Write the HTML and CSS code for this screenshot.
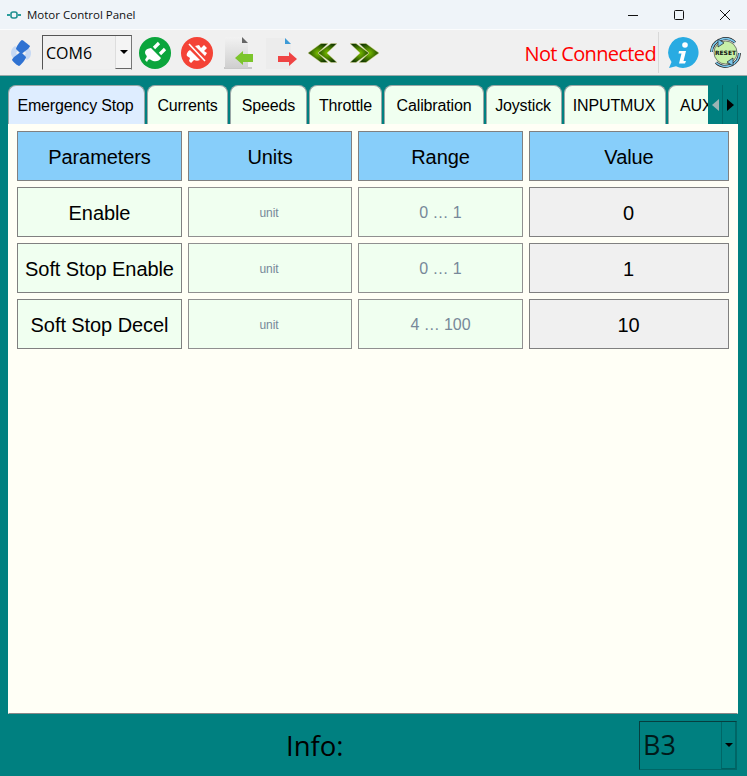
FILE: index.html
```html
<!DOCTYPE html>
<html lang="en">
<head>
<meta charset="utf-8">
<title>Motor Control Panel</title>
<link rel="stylesheet" href="styles.css">
</head>
<body>
<div class="app">
  <header class="titlebar">
    <svg class="app-icon" width="14" height="8" viewBox="0 0 14 8"><path d="M0 4h3M11 4h3" stroke="#2a9d9d" stroke-width="2"/><rect x="4" y="1" width="6" height="6" rx="2" fill="none" stroke="#1f8f8f" stroke-width="1.6"/></svg>
    <span class="title">Motor Control Panel</span>
    <div class="win-controls">
      <svg width="12" height="12" viewBox="0 0 12 12"><path d="M1 6.500h10" stroke="#111" stroke-width="1"/></svg>
      <svg width="12" height="12" viewBox="0 0 12 12"><rect x="1.500" y="1.500" width="9" height="9" rx="1" fill="none" stroke="#111"/></svg>
      <svg width="12" height="12" viewBox="0 0 12 12"><path d="M1 1l10 10M11 1L1 11" stroke="#111" stroke-width="1"/></svg>
    </div>
  </header>

  <div class="toolbar">
    <svg class="tb-logo" width="22" height="26" viewBox="0 0 22 26">
      <path d="M1 13c0-3 1-5 4-7l4 3-3 4 4 4-3 3c-4-1-6-4-6-7z" fill="#c6d9f4"/>
      <path d="M21 13c0 3-1 5-4 7l-4-3 3-4-4-4 3-3c4 1 6 4 6 7z" fill="#c6d9f4"/>
      <path d="M12 0c1 0 7 5 8 6 0 2-6 6-9 8L6 9c0-2 4-8 6-9z" fill="#2f72d2"/>
      <path d="M9 26c-1 0-6-4-7-6 0-2 6-6 9-8l5 5c0 2-5 8-7 9z" fill="#2f72d2"/>
    </svg>
    <div class="combo combo-com">
      <span class="combo-text">COM6</span>
      <span class="combo-btn"><i class="caret"></i></span>
    </div>
    <svg class="round-btn" width="32" height="32" viewBox="0 0 32 32">
      <circle cx="16" cy="16" r="16" fill="#0ba53c"/>
      <path d="M12 11l10 10c-2 4-7 4-10 2-1-1-2-1-3 0l-1 2-2-2 1-2c1-1 1-2 0-3-2-3-1-6 5-7z" fill="#fff"/>
      <path d="M15 11l5-5M21 17l5-5" stroke="#fff" stroke-width="3.200"/>
    </svg>
    <svg class="round-btn" width="32" height="32" viewBox="0 0 32 32">
      <circle cx="16" cy="16" r="16" fill="#f44336"/>
      <path d="M9 13l10 10c-2 1-4 1-6 0l-3 3-2-2 1-3-3-2c-1-2 1-5 3-6z" fill="#fff"/>
      <path d="M14 9l10 10 2-3-3-2 3-3-3-3-3 3-2-3z" fill="#fff"/>
      <path d="M8 7l16 17" stroke="#fff" stroke-width="1.600"/>
    </svg>
    <svg class="file-btn" width="32" height="34" viewBox="0 0 32 34">
      <defs><linearGradient id="pg" x1="0" y1="0" x2="0" y2="1"><stop offset="0" stop-color="#f2f2f2"/><stop offset="1" stop-color="#cfcfcf"/></linearGradient></defs>
      <path d="M0 31h28v2H0z" fill="#c8c8c8"/>
      <path d="M1 1h17l6 6v25H1z" fill="url(#pg)"/>
      <path d="M18 1l6 6h-6z" fill="#666"/>
      <path d="M11 22l8-7v3h10v8H19v3z" fill="#7cc52c"/>
    </svg>
    <svg class="file-btn" width="32" height="34" viewBox="0 0 32 34">
      <path d="M1 2h19l6 6v25H1z" fill="#ececec"/>
      <path d="M20 2l6 6h-6z" fill="#3d9ad6"/>
      <path d="M13 20h11v-4l8 7-8 7v-4H13z" fill="#ef4444"/>
    </svg>
    <svg class="chev" width="31" height="20" viewBox="0 0 31 20">
      <defs><radialGradient id="cg" cx=".5" cy=".5" r=".55"><stop offset="0" stop-color="#7cc000"/><stop offset="1" stop-color="#123800"/></radialGradient></defs>
      <path d="M14 .5h7L11 10l10 9.500h-7L1 10z" fill="url(#cg)" stroke="#d8d890" stroke-width=".5"/>
      <path d="M24 .5h6L20 10l10 9.500h-6L11 10z" fill="url(#cg)" stroke="#d8d890" stroke-width=".5"/>
    </svg>
    <svg class="chev chev-next" width="31" height="20" viewBox="0 0 31 20">
      <path d="M17 .5h-7l10 9.500-10 9.500h7L30 10z" fill="url(#cg)" stroke="#d8d890" stroke-width=".5"/>
      <path d="M7 .5H1l10 9.500L1 19.500h6L20 10z" fill="url(#cg)" stroke="#d8d890" stroke-width=".5"/>
    </svg>
    <span class="status">Not Connected</span>
    <span class="tb-sep"></span>
    <svg class="info" width="32" height="32" viewBox="0 0 32 32">
      <path d="M16 0a15.500 15.500 0 1 1-7 29.300L2 31l2.500-6A15.500 15.500 0 0 1 16 0z" fill="#29abe2"/>
      <circle cx="18" cy="8" r="2.800" fill="#fff"/>
      <path d="M12 14h7l-2.500 10h2.500l-1 2.500h-6l2.500-10h-3z" fill="#fff"/>
    </svg>
    <svg class="reset" width="33" height="33" viewBox="0 0 33 33">
      <circle cx="16.500" cy="16.500" r="11.500" fill="#c8f0a8" stroke="#333" stroke-width=".6"/>
      <path d="M2.500 16A14 14 0 0 1 26 6.500" fill="none" stroke="#222" stroke-width="3"/>
      <path d="M30.500 17A14 14 0 0 1 7 26.500" fill="none" stroke="#222" stroke-width="3"/>
      <path d="M2.500 16A14 14 0 0 1 26 6.500" fill="none" stroke="#7cc8ec" stroke-width="1.600"/>
      <path d="M30.500 17A14 14 0 0 1 7 26.500" fill="none" stroke="#7cc8ec" stroke-width="1.600"/>
      <path d="M9 3l0 8 6-4zM24 30l0-8-6 4z" fill="#7cc8ec" stroke="#222" stroke-width=".7"/>
      <text x="16.500" y="18.800" class="reset-text" text-anchor="middle">RESET</text>
    </svg>
  </div>

  <main class="content">
    <nav class="tabs">
      <div class="tab tab-active w-emergency">Emergency Stop</div>
      <div class="tab w-currents">Currents</div>
      <div class="tab w-speeds">Speeds</div>
      <div class="tab w-throttle">Throttle</div>
      <div class="tab w-calibration">Calibration</div>
      <div class="tab w-joystick">Joystick</div>
      <div class="tab w-inputmux">INPUTMUX</div>
      <div class="tab w-aux">AUX</div>
      <div class="tab-scroll">
        <span class="scroll-btn"><i class="tri tri-left"></i></span>
        <span class="scroll-btn"><i class="tri tri-right"></i></span>
      </div>
    </nav>
    <section class="panel">
      <div class="grid">
        <div class="cell head">Parameters</div>
        <div class="cell head">Units</div>
        <div class="cell head">Range</div>
        <div class="cell head">Value</div>

        <div class="cell name">Enable</div>
        <div class="cell unit">unit</div>
        <div class="cell range">0 … 1</div>
        <div class="cell value">0</div>

        <div class="cell name">Soft Stop Enable</div>
        <div class="cell unit">unit</div>
        <div class="cell range">0 … 1</div>
        <div class="cell value">1</div>

        <div class="cell name">Soft Stop Decel</div>
        <div class="cell unit">unit</div>
        <div class="cell range">4 … 100</div>
        <div class="cell value">10</div>
      </div>
    </section>
    <footer class="footer">
      <span class="info-label">Info:</span>
      <div class="combo combo-b3">
        <span class="combo-text">B3</span>
        <span class="combo-btn"><i class="caret"></i></span>
      </div>
    </footer>
  </main>
</div>
</body>
</html>
```
FILE: styles.css
```css
* { box-sizing: border-box; }
html, body { margin: 0; padding: 0; }
body { width: 747px; height: 776px; overflow: hidden; font-family: "Liberation Sans", Arial, sans-serif; }
.app { display: flex; flex-direction: column; height: 776px; background: #008080; }

.titlebar { height: 30px; flex: none; display: flex; align-items: center; background: #eff4f9; border-bottom: 1px solid #fbfcfd; padding-left: 7px; }
.app-icon { margin-right: 6px; }
.title { font: 11.500px "Open Sans", "Noto Sans", sans-serif; color: #111; }
.win-controls { margin-left: auto; display: flex; gap: 34px; padding-right: 16px; }

.toolbar { height: 46px; flex: none; display: flex; align-items: center; background: #f0f0f0; border-bottom: 1px solid #9aa; padding-left: 10px; position: relative; }
.tb-logo { margin-right: 10px; flex: none; }
.round-btn { margin-left: 10px; flex: none; }
.combo-com + .round-btn { margin-left: 7px; }
.file-btn { flex: none; margin-left: 11px; }
.chev { flex: none; margin-left: 8px; }
.chev-next { margin-left: 11px; }
.file-btn + .file-btn { margin-left: 9px; }
.file-btn + .chev { margin-left: 10px; }
.status { margin-left: auto; font: 20px/28px "Open Sans", "Noto Sans", sans-serif; letter-spacing: -0.65px; color: #f00; padding-top: 2px; }
.tb-sep { width: 1px; height: 41px; background: #d8d8d8; margin: 0 8px 0 2px; flex: none; }
.info { flex: none; margin-right: 10px; }
.reset { flex: none; margin-right: 5px; }
.reset-text { font: bold 6px "DejaVu Sans", sans-serif; fill: #111; }

.combo { display: flex; border: 1px solid #555; border-right-color: #777; border-bottom-color: #eee; }
.combo-com { width: 90px; height: 35px; background: #f0f0f0; align-items: stretch; }
.combo-com .combo-text { flex: 1; font: 16px/35px "Open Sans", "Noto Sans", sans-serif; color: #000; padding-left: 3px; }
.combo-btn { width: 16px; flex: none; display: flex; align-items: center; justify-content: center; background: #f4f4f4; border-left: 1px solid #ddd; border-bottom: 1px solid #666; }
.caret { width: 0; height: 0; border-left: 4px solid transparent; border-right: 4px solid transparent; border-top: 4px solid #000; }

.content { flex: 1; display: flex; flex-direction: column; padding: 9px 9px 0 8px; min-height: 0; }
.tabs { height: 40px; flex: none; display: flex; gap: 2px; overflow: hidden; position: relative; }
.tab { flex: none; height: 40px; display: flex; align-items: flex-start; justify-content: center; padding-top: 10px; font-size: 16px; line-height: 19px; letter-spacing: -0.15px; color: #000; background: #f0fff0; border: 1px solid #9aa6a6; border-bottom: none; border-radius: 8px 8px 0 0; white-space: nowrap; }
.tab-active { background: #deedff; padding-right: 2px; }
.w-emergency { width: 137px; }
.w-currents { width: 81px; }
.w-speeds { width: 77px; }
.w-throttle { width: 73px; }
.w-calibration { width: 100px; }
.w-joystick { width: 76px; padding-right: 2px; }
.w-inputmux { width: 102px; padding-right: 2px; }
.w-aux { width: 60px; justify-content: flex-start; padding-left: 11px; }
.tab-scroll { position: absolute; right: 0; top: 0; width: 30px; height: 40px; display: flex; background: #008080; }
.scroll-btn { width: 15px; display: flex; align-items: center; justify-content: center; border-right: 1px solid #006a6a; }
.tri { width: 0; height: 0; border-top: 6px solid transparent; border-bottom: 6px solid transparent; }
.tri-left { border-right: 7px solid #9ab4b4; }
.tri-right { border-left: 7px solid #000; }

.panel { height: 590px; flex: none; margin-top: -1px; background: #fffff6; border: 1px solid #fffff6; border-bottom-color: #888; padding: 6px 8px; position: relative; }
.grid { display: grid; grid-template-columns: 165px 164px 165px 200px; grid-auto-rows: 50px; gap: 6px; }
.cell { display: flex; align-items: center; justify-content: center; border: 1px solid #808080; white-space: nowrap; padding-top: 2px; letter-spacing: -0.08px; }
.head { background: #87cefa; font-size: 20px; color: #000; }
.name { background: #f0fff0; font-size: 20px; color: #000; }
.unit { background: #f0fff0; font-size: 12px; color: #778899; border-color: #909090; padding-right: 2px; }
.range { background: #f0fff0; font-size: 16px; color: #778899; border-color: #909090; }
.value { background: #f0f0f0; font-size: 20px; color: #000; padding-right: 1px; }

.footer { flex: 1; position: relative; display: flex; align-items: center; min-height: 0; }
.info-label { margin-left: 278px; font: 27.500px "Open Sans", "Noto Sans", sans-serif; color: #000; }
.combo-b3 { margin-left: auto; margin-right: 1px; width: 98px; height: 49px; border-color: #063f3f; border-right-color: #066; border-bottom-color: #066; background: #008080; }
.combo-b3 .combo-text { flex: 1; font: 27px/46px "Open Sans", "Noto Sans", sans-serif; color: #001a1a; padding-left: 3px; }
.combo-b3 .combo-btn { background: #008080; border-left: 1px solid #006666; border-right: 1px solid #006666; border-bottom: 1px solid #006060; width: 15px; }
```
